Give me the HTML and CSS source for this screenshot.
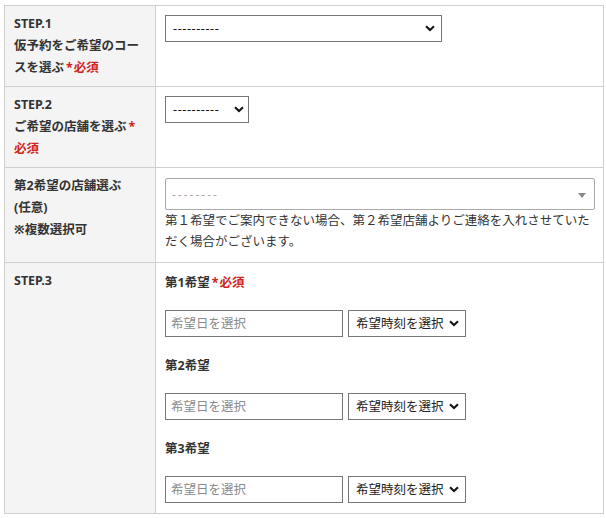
FILE: index.html
```html
<!DOCTYPE html>
<html lang="ja">
<head>
<meta charset="utf-8">
<title>予約フォーム</title>
<link rel="stylesheet" href="styles.css">
</head>
<body>
<table class="form-table">
  <tr>
    <th><span class="ln">STEP.1</span><span class="ln">仮予約をご希望のコー</span><span class="ln">スを選ぶ<span class="ast">*</span><span class="req">必須</span></span></th>
    <td>
      <select class="sel sel-course"><option>----------</option></select>
    </td>
  </tr>
  <tr>
    <th><span class="ln">STEP.2</span><span class="ln">ご希望の店舗を選ぶ<span class="ast">*</span></span><span class="ln req">必須</span></th>
    <td>
      <select class="sel sel-shop"><option>----------</option></select>
    </td>
  </tr>
  <tr>
    <th><span class="ln">第2希望の店舗選ぶ</span><span class="ln">(任意)</span><span class="ln">※複数選択可</span></th>
    <td>
      <div class="multi"><span class="multi-ph">--------</span><span class="multi-arrow"></span></div>
      <p class="note">第１希望でご案内できない場合、第２希望店舗よりご連絡を入れさせていただく場合がございます。</p>
    </td>
  </tr>
  <tr>
    <th>STEP.3</th>
    <td>
      <div class="wish">
        <p class="wish-label">第1希望<span class="ast">*</span><span class="req">必須</span></p>
        <div class="wish-row">
          <input class="date" type="text" placeholder="希望日を選択">
          <select class="sel sel-time"><option>希望時刻を選択</option></select>
        </div>
        <p class="wish-label">第2希望</p>
        <div class="wish-row">
          <input class="date" type="text" placeholder="希望日を選択">
          <select class="sel sel-time"><option>希望時刻を選択</option></select>
        </div>
        <p class="wish-label">第3希望</p>
        <div class="wish-row">
          <input class="date" type="text" placeholder="希望日を選択">
          <select class="sel sel-time"><option>希望時刻を選択</option></select>
        </div>
      </div>
    </td>
  </tr>
</table>
</body>
</html>
```
FILE: styles.css
```css
html, body {
  margin: 0;
  background: #fff;
}
body {
  padding: 5px 4px;
  font-family: "Noto Sans", "Noto Sans CJK JP", sans-serif;
  font-size: 12.5px;
  color: #333;
}
.form-table {
  border-collapse: collapse;
  width: 600px;
  table-layout: fixed;
}
.form-table th,
.form-table td {
  border: 1px solid #cfcfcf;
  vertical-align: top;
  text-align: left;
}
.form-table th {
  width: 132px;
  padding: 7px 9px;
  background: #f4f4f4;
  font-weight: bold;
  line-height: 22px;
}
.ln {
  display: block;
}
.form-table td {
  padding: 9px 8px 10px 9px;
  line-height: 21px;
}
.req {
  color: #d0231b;
}
.ast {
  color: #d0231b;
  margin: 0 1px 0 2px;
}
.sel {
  appearance: none;
  -webkit-appearance: none;
  display: block;
  box-sizing: border-box;
  margin: 0;
  height: 27px;
  border: 1px solid #767676;
  border-radius: 0;
  background: #fff url("data:image/svg+xml;utf8,<svg xmlns='http://www.w3.org/2000/svg' width='10' height='7' viewBox='0 0 10 7'><path d='M1 1.2 L5 5 L9 1.2' fill='none' stroke='%23111' stroke-width='2'/></svg>") no-repeat;
  font-family: "Noto Sans", "Noto Sans CJK JP", sans-serif;
  font-size: 12.5px;
  color: #111;
  padding: 0 20px 0 7px;
}
.sel-course {
  width: 277px;
  background-position: right 6px center;
  letter-spacing: 0.6px;
}
.sel-shop {
  width: 84px;
  background-position: right 4px center;
  letter-spacing: 0.6px;
}
.sel-time {
  width: 118px;
  background-position: right 6px center;
  color: #222;
}
.multi {
  position: relative;
  height: 30px;
  border: 1px solid #aaa;
  border-radius: 2px;
  margin-top: 1px;
  display: flex;
  align-items: center;
  padding-left: 6px;
}
.multi-ph {
  color: #aaa;
  letter-spacing: 2px;
  font-size: 12px;
}
.multi-arrow {
  position: absolute;
  right: 8px;
  top: 14px;
  width: 0;
  height: 0;
  border-left: 4px solid transparent;
  border-right: 4px solid transparent;
  border-top: 5px solid #888;
}
.note {
  margin: 0;
  line-height: 21px;
}
.wish-label {
  margin: 0;
  font-weight: bold;
  line-height: 22px;
}
.wish-row {
  display: flex;
  gap: 5px;
  margin: 16px 0 18px;
}
.wish-row:last-child {
  margin-bottom: 0;
}
.date {
  box-sizing: border-box;
  width: 178px;
  height: 27px;
  margin: 0;
  border: 1px solid #767676;
  border-radius: 0;
  padding: 0 5px;
  font-family: "Noto Sans", "Noto Sans CJK JP", sans-serif;
  font-size: 12.5px;
  color: #333;
}
.date::placeholder {
  color: #8a8a8a;
}
```
